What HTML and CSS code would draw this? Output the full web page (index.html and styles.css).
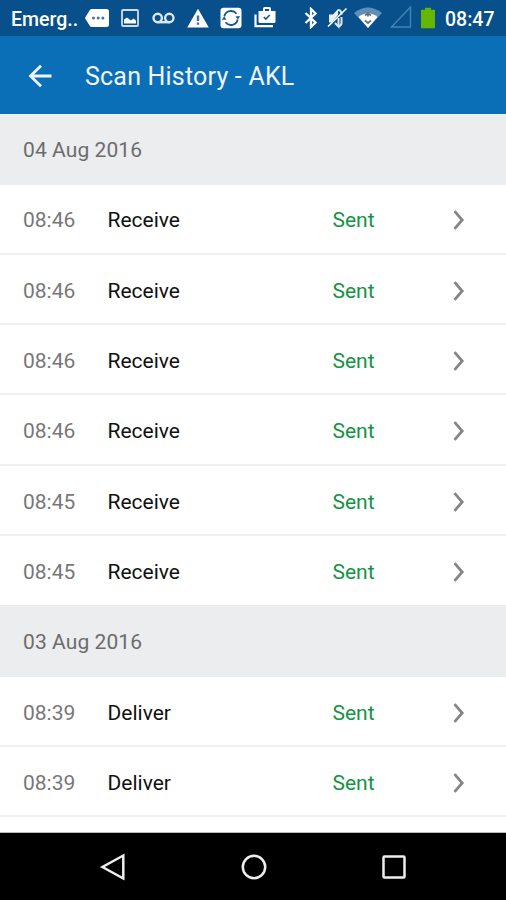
FILE: index.html
```html
<!DOCTYPE html>
<html lang="en">
<head>
<meta charset="utf-8">
<title>Scan History</title>
<link rel="stylesheet" href="styles.css">
</head>
<body>
<div class="screen">
  <div class="status">
    <span class="carrier">Emerg..</span>
    <svg class="tag" width="24" height="20" viewBox="0 0 24 20"><path fill="#fff" d="M7 1h14.500q2.500 0 2.500 2.500v13q0 2.500-2.500 2.500h-14.500q-1.500 0-2.300-1.300l-4.200-6.700q-.7-1 0-2l4.200-6.700q.8-1.300 2.300-1.300z"/><g fill="#47749f"><circle cx="8.500" cy="10" r="1.500"/><circle cx="13.200" cy="10" r="1.500"/><circle cx="17.900" cy="10" r="1.500"/></g></svg>
    <svg class="picture" width="18" height="20" viewBox="0 0 18 20"><rect x="1" y="2" width="16" height="16" rx="1" fill="none" stroke="#cfdce9" stroke-width="1.800"/><path fill="#fff" d="M3 15.500v-4l3-2 4 3 2.500-2 2.500 2v3z"/></svg>
    <svg class="voicemail" width="23" height="20" viewBox="0 0 23 20"><g fill="none" stroke="#dce7f2" stroke-width="2.400"><circle cx="5.700" cy="10" r="4.200"/><circle cx="17.300" cy="10" r="4.200"/><path d="M5.700 14.200h11.600"/></g></svg>
    <svg class="warning" width="22" height="20" viewBox="0 0 22 20"><path fill="#fff" d="M11 .8 21.800 19.500H.2z"/><path stroke="#496f99" stroke-width="2.400" d="M11 7.500v5.500M11 14.600v2.200"/></svg>
    <svg class="sync" width="22" height="22" viewBox="0 0 22 22"><rect x=".5" y=".8" width="21" height="20.400" rx="3" fill="#fff"/><g fill="none" stroke="#17588e" stroke-width="1.800"><path d="M4.300 9.500a6.900 6.900 0 0 1 12.200-2.800M17.700 12.500a6.900 6.900 0 0 1-12.200 2.800"/></g><path fill="#17588e" d="M15.500 9.300h4.700l-2.300 3.200zM1.800 12.700h4.700l-2.300-3.200z"/></svg>
    <svg class="briefcase" width="22" height="22" viewBox="0 0 22 22"><path fill="#fff" fill-rule="evenodd" d="M4.500 5H9V3Q9 1 10.500 1h5Q17 1 17 3v2h4.500v10.500q0 1.500-1.500 1.500H6q-1.500 0-1.500-1.500zM11 3v2h4V3z"/><path fill="none" stroke="#fff" stroke-width="2.200" d="M1.500 8.500v11.700h17.500"/><path fill="none" stroke="#17588e" stroke-width="1.600" d="M9.800 11l2 2 4-4"/></svg>
    <svg class="bluetooth" width="14" height="22" viewBox="0 0 14 22"><path fill="none" stroke="#fff" stroke-width="2.300" d="M1.500 6 11.500 15.500 7 20V2L11.500 6.500 1.500 16"/></svg>
    <svg class="muted" width="21" height="22" viewBox="0 0 21 22"><path fill="#e8f0f7" d="M2 7.500h4l5-5.500v6L4.500 15.500H2z"/><path fill="none" stroke="#dce7f2" stroke-width="2" d="M8 16l3.500 3.500V11M11 3c3 0 3.500 2 3.500 4.500M14.500 10v6q0 2.500-3 3.500"/><path stroke="#fff" stroke-width="1.600" d="M1 19.500 19.500 1.500"/></svg>
    <svg class="wifi" width="28" height="22" viewBox="0 0 28 22"><path fill="#5f8fb9" d="M0 6Q14-5 28 6L14 21z"/><path fill="#fff" d="M4.500 10Q14 2.500 23.500 10L14 21z"/><path fill="none" stroke="#69737a" stroke-width="1.800" d="M11 8.500l3-2.500 3 2.500M11 13.500l3 2.500 3-2.500M14 6.500v3"/></svg>
    <svg class="signal" width="22" height="24" viewBox="0 0 22 24"><path fill="none" stroke="#4383b6" stroke-width="1.400" d="M20.500 2v20H1.500z"/></svg>
    <svg class="battery" width="14" height="22" viewBox="0 0 14 22"><path fill="#65b700" d="M4 .8h6v2h4v18.500H0V2.800h4z"/></svg>
    <span class="clock">08:47</span>
  </div>
  <header class="toolbar">
    <svg class="back" width="24" height="24" viewBox="0 0 24 24"><path fill="none" stroke="#eef5fc" stroke-width="2.800" d="M23.500 12H2.500M13 1.700 2.500 12 13 22.300"/></svg>
    <h1 class="title">Scan History - AKL</h1>
  </header>
  <main class="list">
    <h2 class="date first">04 Aug 2016</h2>
    <div class="row"><span class="time">08:46</span><span class="action">Receive</span><span class="state">Sent</span><svg class="chevron" viewBox="0 0 12 20"><path d="M1.500 1.200 9.200 10 1.500 18.800"/></svg></div>
    <div class="row"><span class="time">08:46</span><span class="action">Receive</span><span class="state">Sent</span><svg class="chevron" viewBox="0 0 12 20"><path d="M1.500 1.200 9.200 10 1.500 18.800"/></svg></div>
    <div class="row"><span class="time">08:46</span><span class="action">Receive</span><span class="state">Sent</span><svg class="chevron" viewBox="0 0 12 20"><path d="M1.500 1.200 9.200 10 1.500 18.800"/></svg></div>
    <div class="row"><span class="time">08:46</span><span class="action">Receive</span><span class="state">Sent</span><svg class="chevron" viewBox="0 0 12 20"><path d="M1.500 1.200 9.200 10 1.500 18.800"/></svg></div>
    <div class="row"><span class="time">08:45</span><span class="action">Receive</span><span class="state">Sent</span><svg class="chevron" viewBox="0 0 12 20"><path d="M1.500 1.200 9.200 10 1.500 18.800"/></svg></div>
    <div class="row last"><span class="time">08:45</span><span class="action">Receive</span><span class="state">Sent</span><svg class="chevron" viewBox="0 0 12 20"><path d="M1.500 1.200 9.200 10 1.500 18.800"/></svg></div>
    <h2 class="date">03 Aug 2016</h2>
    <div class="row"><span class="time">08:39</span><span class="action">Deliver</span><span class="state">Sent</span><svg class="chevron" viewBox="0 0 12 20"><path d="M1.500 1.200 9.200 10 1.500 18.800"/></svg></div>
    <div class="row"><span class="time">08:39</span><span class="action">Deliver</span><span class="state">Sent</span><svg class="chevron" viewBox="0 0 12 20"><path d="M1.500 1.200 9.200 10 1.500 18.800"/></svg></div>
  </main>
  <nav class="navbar">
    <svg width="28" height="28" viewBox="0 0 28 28"><path d="M24.300 2.500v23L3.500 14z"/></svg>
    <svg width="28" height="28" viewBox="0 0 28 28"><circle cx="14" cy="14" r="11.200"/></svg>
    <svg width="28" height="28" viewBox="0 0 28 28"><rect x="3.500" y="3.500" width="21" height="21" rx="1"/></svg>
  </nav>
</div>
</body>
</html>
```
FILE: styles.css
```css
* { box-sizing: border-box; }
body { margin: 0; font-family: Roboto, "Liberation Sans", sans-serif; }
svg { display: block; flex: none; }
.screen { display: flex; flex-direction: column; width: 506px; height: 900px; overflow: hidden; background: #fff; }

.status { display: flex; align-items: center; flex: none; height: 36px; padding-left: 11px; background: #07508b; color: #fff; font-size: 19.500px; font-weight: 500; white-space: nowrap; }
.carrier { width: 74px; padding-top: 2px; }
.picture { margin-left: 12px; }
.voicemail { margin-left: 13px; }
.warning { margin-left: 12px; }
.sync { margin-left: 11px; }
.briefcase { margin-left: 12px; margin-bottom: 2px; }
.bluetooth { margin-left: 28px; }
.muted { margin-left: 9px; }
.wifi { margin-left: 6px; }
.signal { margin-left: 8px; margin-bottom: 2px; }
.battery { margin-left: 9px; }
.clock { margin-left: 10px; padding-top: 2px; }

.toolbar { display: flex; align-items: center; flex: none; height: 78px; padding-left: 28px; background: #0b6fb8; color: #eef5fc; }
.back { margin-top: 1px; }
.title { margin: 3px 0 0 33px; font-size: 25px; font-weight: 400; line-height: 30px; letter-spacing: .2px; white-space: nowrap; }

.list { flex: 1; min-height: 0; overflow: hidden; border-bottom: 1px solid #bbb; }
.date { display: flex; align-items: center; height: 71.300px; margin: -1px 0 0; padding: 2px 0 0 23px; background: #ecedef; color: #6c6c6c; font-size: 21px; font-weight: 400; letter-spacing: .08px; }
.first { height: 70.600px; margin-top: 0; border-top: 1px solid #f6f7f8; padding-top: 1px; }
.row { display: grid; grid-template-columns: 84.500px 225px 120px 12px; align-items: center; height: 70.300px; padding: 3.500px 0 0 23px; border-bottom: 2px solid #f0f0f0; font-size: 21px; }
.last { border-bottom-color: transparent; }
.time { color: #777; }
.action { color: #111; }
.state { color: #14943f; }
.chevron { width: 12px; height: 20px; fill: none; stroke: #858585; stroke-width: 2.800; }

.navbar { display: flex; align-items: center; flex: none; gap: 112.500px; height: 67px; padding-left: 99px; background: #000; }
.navbar svg { fill: none; stroke: #eee; stroke-width: 2.500; }
```
